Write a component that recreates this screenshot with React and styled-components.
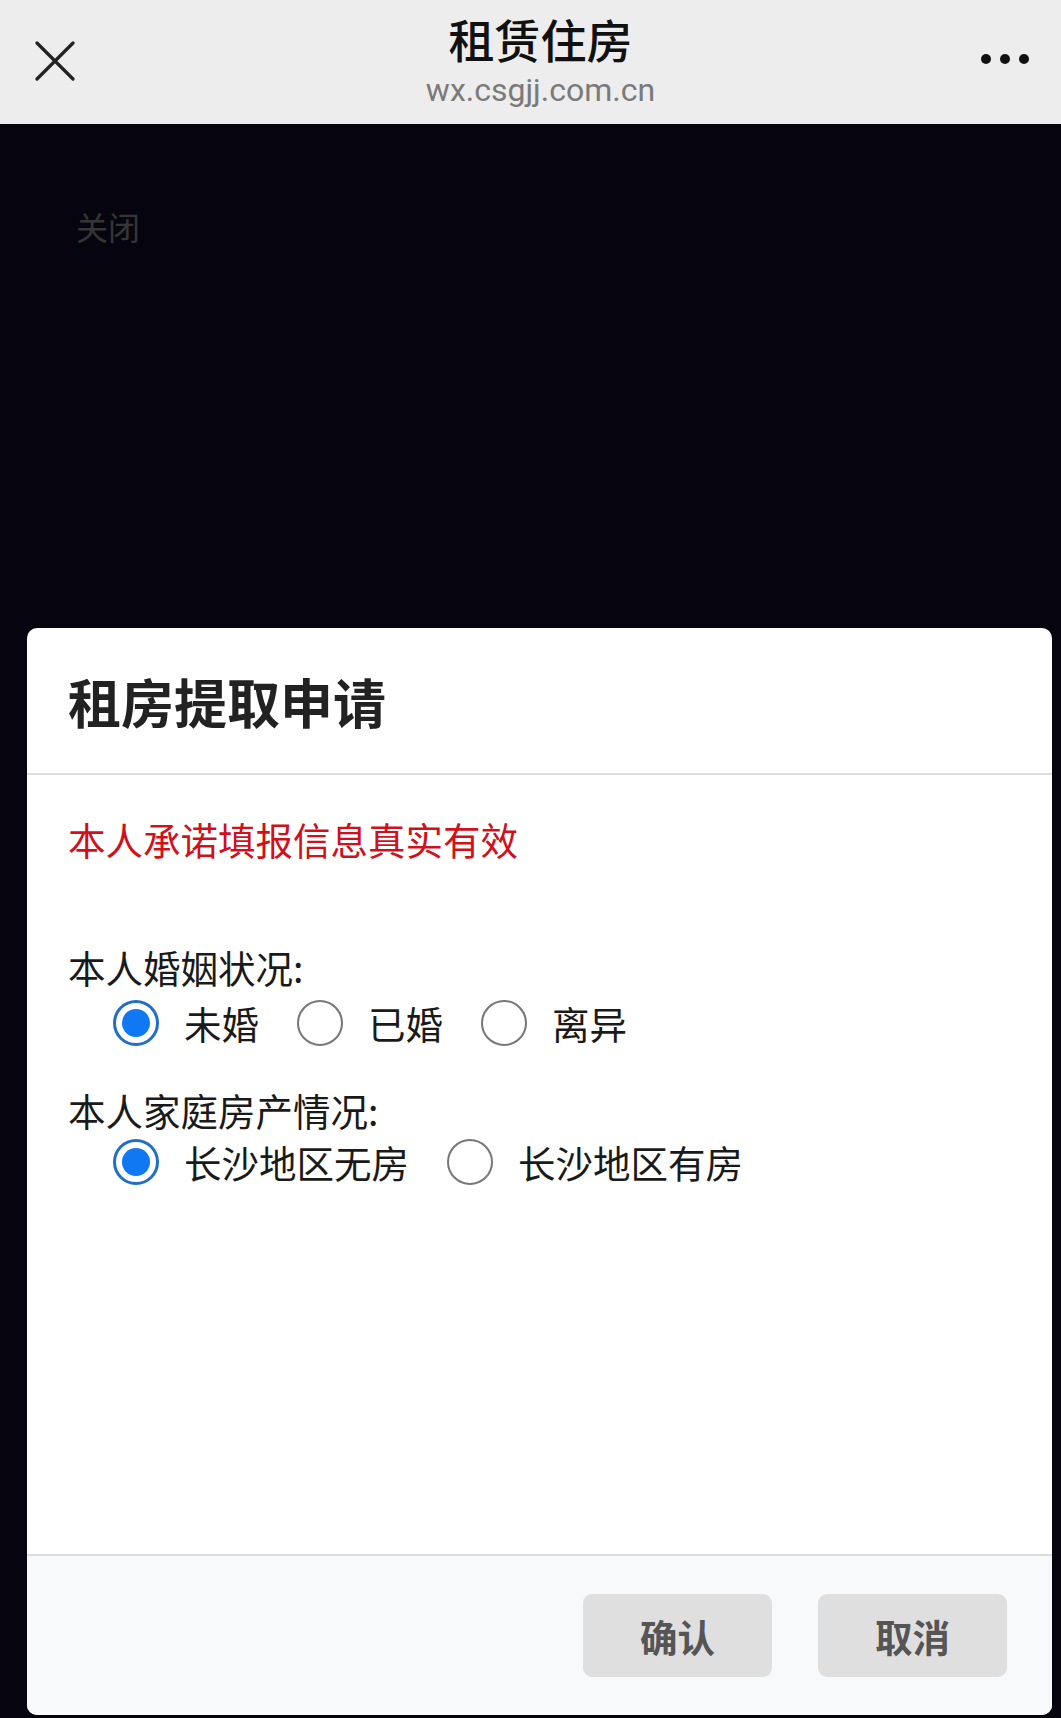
import React, { useState } from 'react';
import styled, { createGlobalStyle } from 'styled-components';

const GlobalStyle = createGlobalStyle`
  html, body {
    margin: 0;
    padding: 0;
    background: #06050f;
  }
  body {
    font-family: "Noto Sans CJK SC", "Noto Sans", sans-serif;
  }
`;

const marriageOptions = ['未婚', '已婚', '离异'];
const houseOptions = ['长沙地区无房', '长沙地区有房'];

const App = () => {
  const [marriage, setMarriage] = useState('未婚');
  const [house, setHouse] = useState('长沙地区无房');

  return (
    <>
      <GlobalStyle />
      <Page>
        <TopBar>
          <BarLeft>
            <svg width="40" height="40" viewBox="0 0 40 40">
              <path d="M2 2 L38 38 M38 2 L2 38" stroke="#222" strokeWidth="3.2" strokeLinecap="round" />
            </svg>
          </BarLeft>
          <BarCenter>
            <BarTitle>租赁住房</BarTitle>
            <BarUrl>wx.csgjj.com.cn</BarUrl>
          </BarCenter>
          <BarRight>
            <Dot />
            <Dot />
            <Dot />
          </BarRight>
        </TopBar>

        <Backdrop>
          <CloseText>关闭</CloseText>

          <Dialog>
            <DialogHeader>
              <DialogTitle>租房提取申请</DialogTitle>
            </DialogHeader>

            <DialogBody>
              <Promise>本人承诺填报信息真实有效</Promise>

              <FieldLabel top={78}>本人婚姻状况:</FieldLabel>
              <RadioRow top={6}>
                {marriageOptions.map(opt => (
                  <RadioOption key={opt} onClick={() => setMarriage(opt)}>
                    <RadioCircle checked={marriage === opt} />
                    <span>{opt}</span>
                  </RadioOption>
                ))}
              </RadioRow>

              <FieldLabel top={37}>本人家庭房产情况:</FieldLabel>
              <RadioRow top={2}>
                {houseOptions.map(opt => (
                  <RadioOption key={opt} onClick={() => setHouse(opt)}>
                    <RadioCircle checked={house === opt} />
                    <span>{opt}</span>
                  </RadioOption>
                ))}
              </RadioRow>
            </DialogBody>

            <DialogFooter>
              <FooterButton>确认</FooterButton>
              <FooterButton>取消</FooterButton>
            </DialogFooter>
          </Dialog>
        </Backdrop>
      </Page>
    </>
  );
};

export default App;

const Page = styled.div`
  width: 1061px;
  height: 1718px;
  display: flex;
  flex-direction: column;
  overflow: hidden;
`;

const TopBar = styled.div`
  height: 124px;
  flex-shrink: 0;
  background: #ededed;
  display: grid;
  grid-template-columns: 1fr auto 1fr;
  align-items: center;
`;

const BarLeft = styled.div`
  display: flex;
  align-items: center;
  padding-left: 35px;
  margin-top: -2px;
`;

const BarCenter = styled.div`
  display: flex;
  flex-direction: column;
  align-items: center;
  align-self: start;
  padding-top: 12px;
  margin-left: 20px;
`;

const BarTitle = styled.div`
  font-size: 46px;
  line-height: 52px;
  font-weight: 500;
  color: #111;
`;

const BarUrl = styled.div`
  font-family: Roboto, "Liberation Sans", sans-serif;
  font-size: 32px;
  line-height: 40px;
  color: #7a7a7a;
  margin-top: 6px;
`;

const BarRight = styled.div`
  display: flex;
  justify-content: flex-end;
  align-items: center;
  gap: 9px;
  padding-right: 32px;
  margin-top: -6px;
`;

const Dot = styled.span`
  width: 10px;
  height: 10px;
  border-radius: 50%;
  background: #111;
`;

const Backdrop = styled.div`
  flex: 1;
  background: #06050f;
  display: flex;
  flex-direction: column;
  padding: 0 9px 3px 27px;
`;

const CloseText = styled.div`
  font-size: 32px;
  line-height: 40px;
  color: #353535;
  margin: 82px 0 0 49px;
`;

const Dialog = styled.div`
  margin-top: auto;
  height: 1087px;
  background: #fff;
  border-radius: 10px;
  display: flex;
  flex-direction: column;
  overflow: hidden;
`;

const DialogHeader = styled.div`
  height: 147px;
  flex-shrink: 0;
  display: flex;
  align-items: center;
  padding-left: 41px;
  border-bottom: 2px solid #dedede;
  box-sizing: border-box;
`;

const DialogTitle = styled.div`
  font-size: 53px;
  font-weight: 700;
  color: #222;
`;

const DialogBody = styled.div`
  flex: 1;
  padding: 39px 0 0 41px;
  font-size: 37.5px;
  color: #1a1a1a;
`;

const Promise = styled.div`
  line-height: 50px;
  color: #d0101a;
`;

const FieldLabel = styled.div`
  line-height: 50px;
  margin-top: ${p => p.top}px;
`;

const RadioRow = styled.div`
  display: flex;
  align-items: center;
  gap: 38px;
  height: 50px;
  padding-left: 45px;
  margin-top: ${p => p.top}px;
`;

const RadioOption = styled.label`
  display: flex;
  align-items: center;
  gap: 25px;
  line-height: 50px;
  cursor: pointer;
`;

const RadioCircle = styled.span`
  width: 46px;
  height: 46px;
  box-sizing: border-box;
  border-radius: 50%;
  border: ${p => (p.checked ? '3px solid #1f6fc6' : '2.5px solid #777')};
  display: flex;
  align-items: center;
  justify-content: center;

  &::after {
    content: '';
    width: 28px;
    height: 28px;
    border-radius: 50%;
    background: #0f78f2;
    display: ${p => (p.checked ? 'block' : 'none')};
  }
`;

const DialogFooter = styled.div`
  height: 161px;
  flex-shrink: 0;
  background: #f8f9fa;
  border-top: 2px solid #dcdcdc;
  box-sizing: border-box;
  display: flex;
  justify-content: flex-end;
  align-items: flex-start;
  gap: 46px;
  padding: 38px 45px 0 0;
`;

const FooterButton = styled.button`
  width: 189px;
  height: 83px;
  border: none;
  border-radius: 9px;
  background: #dfdfe0;
  color: #555;
  font-family: "Noto Sans CJK SC", sans-serif;
  font-size: 37.5px;
  font-weight: 700;
  cursor: pointer;
`;
